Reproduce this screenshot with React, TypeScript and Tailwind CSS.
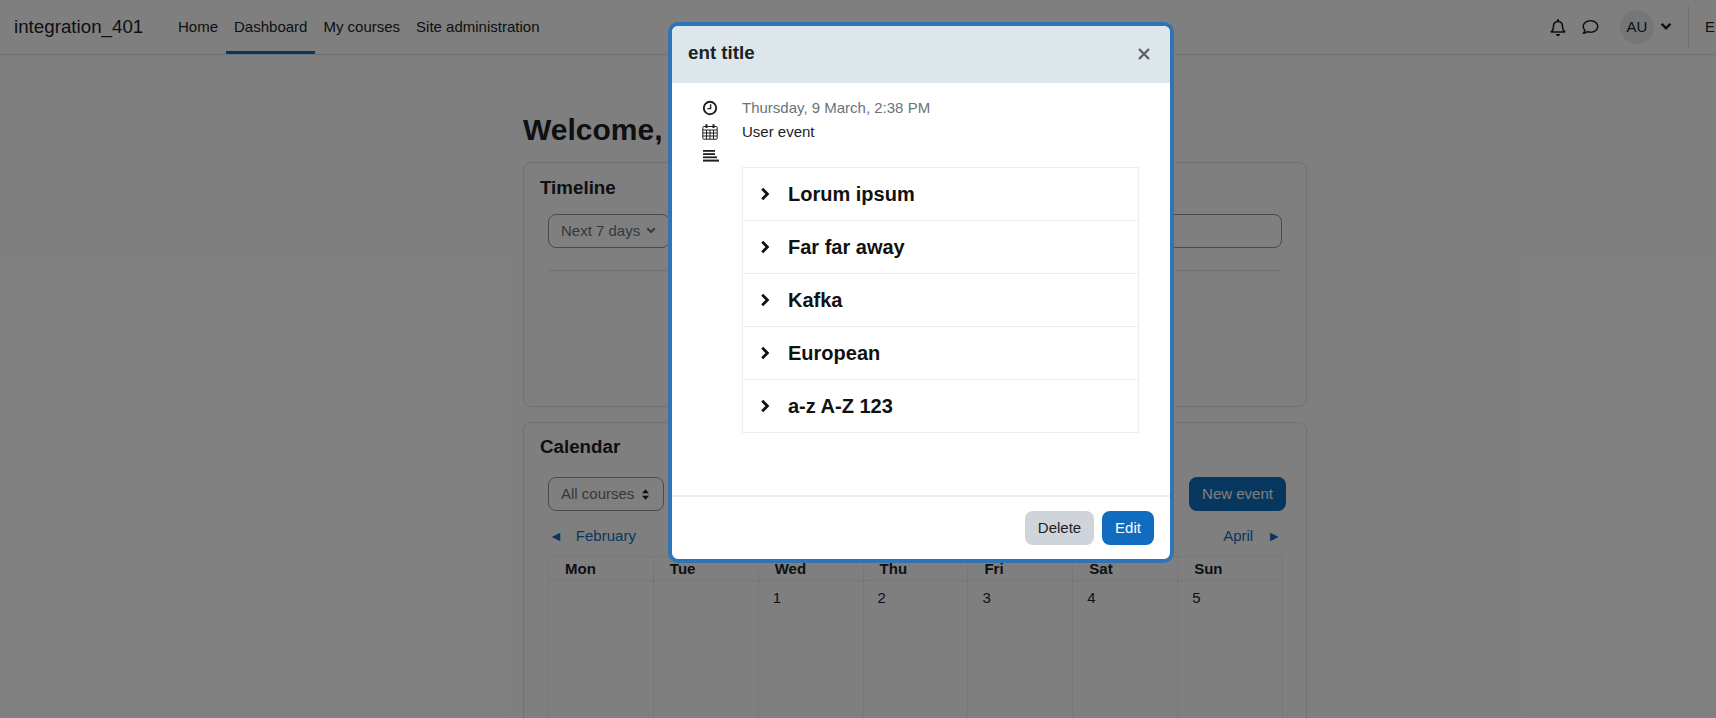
import React from 'react';
import { FaRegBell, FaRegComment } from 'react-icons/fa';

const courses = ['Lorum ipsum', 'Far far away', 'Kafka', 'European', 'a-z A-Z 123'];
const weekDays = ['Mon', 'Tue', 'Wed', 'Thu', 'Fri', 'Sat', 'Sun'];
const firstWeek = ['', '', '1', '2', '3', '4', '5'];

const Chevron: React.FC<{ className?: string }> = ({ className }) => (
    <svg viewBox="0 0 10 10" className={className} fill="none" stroke="currentColor" strokeWidth="2" strokeLinecap="square">
        <path d="M3 2 L6 5 L3 8" />
    </svg>
);

const ClockIcon: React.FC = () => (
    <svg viewBox="0 0 16 16" className="w-[16px] h-[16px]" fill="none" stroke="#1d2125">
        <circle cx="8" cy="8" r="6.2" strokeWidth="1.9" />
        <path d="M8.6 4.2 V8.6 H5.4" strokeWidth="1.4" />
    </svg>
);

const CalendarIcon: React.FC = () => (
    <svg viewBox="0 0 16 16" className="w-[16px] h-[16px]" fill="none" stroke="#1d2125" strokeWidth="1">
        <rect x="0.8" y="2.5" width="14.4" height="12.7" rx="1" />
        <path d="M0.8 6 H15 M0.8 9 H15 M0.8 12 H15 M4.5 6 V15 M8 6 V15 M11.5 6 V15" />
        <path d="M4.5 0.3 V4 M11.5 0.3 V4" strokeWidth="2" />
    </svg>
);

const DescriptionIcon: React.FC = () => (
    <svg viewBox="0 0 16 12" className="w-[16px] h-[12px] ml-[1px]" fill="#1d2125">
        <rect x="0" y="0" width="12" height="1.8" />
        <rect x="0" y="3.2" width="12" height="1.8" />
        <rect x="0" y="6.4" width="14" height="1.8" />
        <rect x="0" y="9.6" width="16" height="2" />
    </svg>
);

const PageBehind: React.FC = () => (
    <div className="h-[718px] overflow-hidden bg-white text-[#1d2125] text-[15px]">
        <nav className="h-[55px] border-b border-[#dee2e6] flex items-stretch pl-[14px]">
            <span className="text-[18.75px] w-[156px] leading-[53px]">integration_401</span>
            <div className="flex text-[15px]">
                <a className="px-2 leading-[54px]">Home</a>
                <a className="px-2 leading-[54px] border-b-[3px] border-[#0f6cbf] h-[54px]">Dashboard</a>
                <a className="px-2 leading-[54px]">My courses</a>
                <a className="px-2 leading-[54px]">Site administration</a>
            </div>
            <div className="ml-auto flex items-center">
                <FaRegBell className="w-[16px] h-[17px] mr-[16px]" />
                <FaRegComment className="w-[17px] h-[16px] mr-[21px]" />
                <span className="w-[34px] h-[34px] rounded-full bg-[#e9ecef] flex items-center justify-center mr-[6px]">AU</span>
                <Chevron className="w-[12px] h-[12px] rotate-90 mr-[16px]" />
                <span className="h-[42px] border-l border-[#dee2e6] mr-[16px]" />
                <span className="w-[11px] overflow-hidden">E</span>
            </div>
        </nav>

        <main className="ml-[523px] w-[784px] pt-[57px]">
            <h2 className="text-[30px] font-bold leading-[36px] h-[50px]">Welcome, Admin</h2>

            <section className="h-[245px] border border-[#dee2e6] rounded-[8px] pt-[14px] px-[16px]">
                <h5 className="text-[18.75px] font-bold leading-[22px]">Timeline</h5>
                <div className="mx-[8px] mt-[15px] flex gap-4">
                    <div className="w-[122px] h-[34px] border border-[#8f959e] rounded-[8px] flex items-center pl-[12px] gap-[6px] text-[#6a737b]">
                        Next 7 days
                        <Chevron className="w-[10px] h-[10px] rotate-90" />
                    </div>
                    <div className="flex-1 h-[34px] border border-[#8f959e] rounded-[8px]" />
                </div>
                <div className="mx-[8px] mt-[22px] border-t border-[#dee2e6]" />
            </section>

            <section className="mt-[15px] h-[400px] border border-[#dee2e6] rounded-[8px] pt-[13px] px-[16px]">
                <h5 className="text-[18.75px] font-bold leading-[22px]">Calendar</h5>
                <div className="ml-[8px] mr-[4px] mt-[19px] flex items-center justify-between">
                    <div className="w-[116px] h-[34px] border border-[#8f959e] rounded-[8px] flex items-center pl-[12px] gap-[8px] text-[#6a737b]">
                        All courses
                        <svg viewBox="0 0 8 12" className="w-[7px] h-[11px]" fill="#1d2125">
                            <path d="M4 0 L8 4.5 H0 Z M4 12 L0 7.5 H8 Z" />
                        </svg>
                    </div>
                    <button className="w-[97px] h-[34px] rounded-[8px] bg-[#0f6cbf] text-white">New event</button>
                </div>
                <div className="mx-[8px] mt-[14px] pl-[1px] flex items-center justify-between text-[#0f6cbf]">
                    <span className="flex items-center gap-[13px]">
                        <span className="text-[14px] leading-[20px]">◄</span>February
                    </span>
                    <span className="flex items-center gap-[14px] pr-[1px]">
                        April<span className="text-[14px] leading-[20px]">►</span>
                    </span>
                </div>
                <div className="mx-[8px] mt-[8px] w-[735px] grid grid-cols-7 border-t border-l border-dotted border-[#dee2e6]">
                    {weekDays.map(day => (
                        <div key={day} className="h-[24px] border-r border-b border-dotted border-[#dee2e6] pl-[16px] font-bold text-[15px] leading-[23px]">
                            {day}
                        </div>
                    ))}
                    {firstWeek.map((date, i) => (
                        <div key={i} className="h-[200px] border-r border-b border-dotted border-[#dee2e6] pl-[14px] pt-[7px] leading-[20px]">
                            {date}
                        </div>
                    ))}
                </div>
            </section>
        </main>
    </div>
);

const App: React.FC = () => {
    return (
        <div className="relative h-[718px] overflow-hidden font-['Liberation_Sans',sans-serif]">
            <PageBehind />

            {/* Backdrop and event dialog */}
            <div className="absolute inset-0 bg-black/50">
                <div className="absolute left-[668px] top-[22px] w-[506px] h-[541px] border-4 border-[#2f75b5] rounded-[10px] bg-white overflow-hidden flex flex-col text-[15px] text-[#1d2125]">
                    <div className="h-[57px] bg-[#dce6eb] flex items-center justify-between pl-[16px] pr-[20px] pb-[2px]">
                        <h5 className="text-[18.75px] font-bold">ent title</h5>
                        <svg viewBox="0 0 12 12" className="w-[12px] h-[12px]" stroke="#5c6268" strokeWidth="2.4">
                            <path d="M1 1 L11 11 M11 1 L1 11" />
                        </svg>
                    </div>

                    <div className="flex-1 flex pt-[13px]">
                        <div className="w-[70px] flex flex-col items-center">
                            <div className="w-[16px] ml-[6px] flex flex-col items-center">
                                <div className="h-[24px] flex items-center"><ClockIcon /></div>
                                <div className="h-[24px] flex items-center"><CalendarIcon /></div>
                                <div className="h-[24px] flex items-center"><DescriptionIcon /></div>
                            </div>
                        </div>
                        <div className="w-[397px]">
                            <div className="h-[24px] leading-[24px] text-[#6a737b]">Thursday, 9 March, 2:38 PM</div>
                            <div className="h-[24px] leading-[24px]">User event</div>
                            <div className="mt-[23px] border-b border-[#eceef0]">
                                {courses.map(course => (
                                    <div key={course} className="h-[53px] border border-b-0 border-[#eceef0] flex items-center pl-[16px]">
                                        <Chevron className="w-[14px] h-[14px] text-[#111] mr-[15px]" />
                                        <span className="text-[20px] font-bold text-[#111]">{course}</span>
                                    </div>
                                ))}
                            </div>
                        </div>
                    </div>

                    <div className="h-[64px] border-t-2 border-[#eceef0] flex items-start justify-end gap-[8px] pt-[14px] pr-[16px]">
                        <button className="w-[69px] h-[34px] rounded-[8px] bg-[#ced4da]">Delete</button>
                        <button className="w-[52px] h-[34px] rounded-[8px] bg-[#0f6cbf] text-white">Edit</button>
                    </div>
                </div>
            </div>
        </div>
    );
};

export default App;
